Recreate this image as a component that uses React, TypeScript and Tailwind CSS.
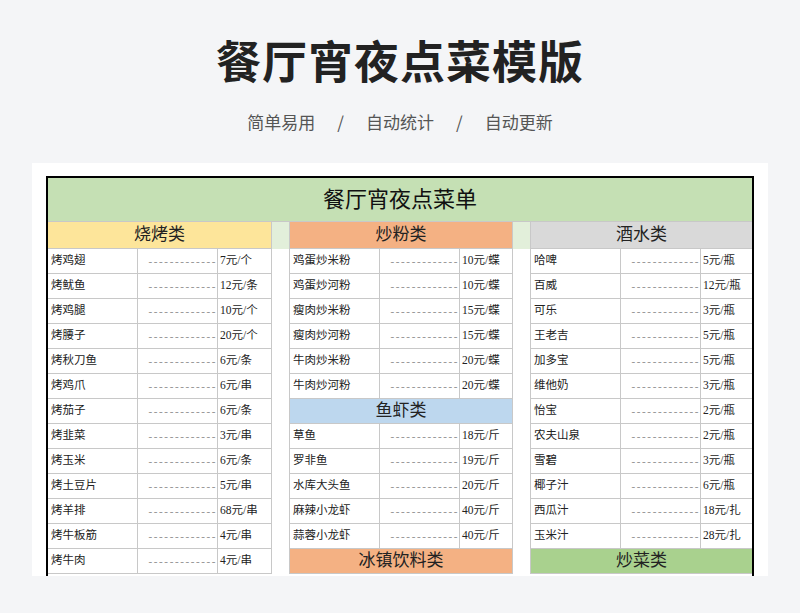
const F = { fontFamily: '"Liberation Serif","Noto Sans CJK SC",serif' };
const left = [["烤鸡翅","7元/个"],["烤鱿鱼","12元/条"],["烤鸡腿","10元/个"],["烤腰子","20元/个"],["烤秋刀鱼","6元/条"],["烤鸡爪","6元/串"],["烤茄子","6元/条"],["烤韭菜","3元/串"],["烤玉米","6元/条"],["烤土豆片","5元/串"],["烤羊排","68元/串"],["烤牛板筋","4元/串"],["烤牛肉","4元/串"]];
const mid1 = [["鸡蛋炒米粉","10元/蝶"],["鸡蛋炒河粉","10元/蝶"],["瘦肉炒米粉","15元/蝶"],["瘦肉炒河粉","15元/蝶"],["牛肉炒米粉","20元/蝶"],["牛肉炒河粉","20元/蝶"]];
const mid2 = [["草鱼","18元/斤"],["罗非鱼","19元/斤"],["水库大头鱼","20元/斤"],["麻辣小龙虾","40元/斤"],["蒜蓉小龙虾","40元/斤"]];
const right = [["哈啤","5元/瓶"],["百威","12元/瓶"],["可乐","3元/瓶"],["王老吉","5元/瓶"],["加多宝","5元/瓶"],["维他奶","3元/瓶"],["怡宝","2元/瓶"],["农夫山泉","2元/瓶"],["雪碧","3元/瓶"],["椰子汁","6元/瓶"],["西瓜汁","18元/扎"],["玉米汁","28元/扎"]];

function Head({ t, c, h = "h-[25px]" }: { t: string; c: string; h?: string }) {
  return <div className={`${h} shrink-0 flex items-center justify-center text-[17px] text-[#222] border-b border-[#c8c8c8] ${c}`}>{t}</div>;
}
function Row({ r }: { r: string[] }) {
  return (
    <div className="h-[25px] shrink-0 grid grid-cols-[90px_80px_1fr] border-b border-[#c8c8c8] text-[11.5px] text-[#222]">
      <div className="flex items-center pl-[3px] border-r border-[#c8c8c8] overflow-hidden whitespace-nowrap">{r[0]}</div>
      <div className="flex items-center justify-end border-r border-[#c8c8c8] text-[#888] overflow-hidden whitespace-nowrap text-[11px] tracking-[1.6px]">-------------</div>
      <div className="flex items-center pl-[2px] whitespace-nowrap overflow-hidden">{r[1]}</div>
    </div>
  );
}
export default function App() {
  return (
    <div className="w-[800px] h-[613px] bg-[#f4f5f7] flex flex-col items-center overflow-hidden" style={{ fontFamily: '"Noto Sans CJK SC",sans-serif' }}>
      <h1 className="mt-[32px] text-[45px] leading-[56px] font-bold text-[#222] tracking-[1px]">餐厅宵夜点菜模版</h1>
      <div className="mt-[22px] text-[17px] text-[#555] flex gap-[22px] leading-[24px]">
        <span>简单易用</span><span>/</span><span>自动统计</span><span>/</span><span>自动更新</span>
      </div>
      <div className="mt-[29px] w-[736px] h-[413px] bg-white pt-[13px] px-[14px] overflow-hidden" style={F}>
        <div className="h-[401px] border-2 border-b-0 border-black overflow-hidden">
          <div className="h-[44px] bg-[#c5e0b4] flex items-center justify-center text-[22px] text-[#111] border-b border-[#c8c8c8]">餐厅宵夜点菜单</div>
          <div className="grid grid-cols-[224px_17px_224px_17px_1fr]">
            <div className="flex flex-col border-r border-[#c8c8c8]">
              <Head t="烧烤类" c="bg-[#fde59a]" h="h-[27px]" />
              {left.map((r) => <Row key={r[0]} r={r} />)}
            </div>
            <div className="flex flex-col"><div className="h-[27px] bg-[#e2efda]" /></div>
            <div className="flex flex-col border-x border-[#c8c8c8]">
              <Head t="炒粉类" c="bg-[#f4b183]" h="h-[27px]" />
              {mid1.map((r) => <Row key={r[0]} r={r} />)}
              <Head t="鱼虾类" c="bg-[#bdd7ee]" />
              {mid2.map((r) => <Row key={r[0]} r={r} />)}
              <Head t="冰镇饮料类" c="bg-[#f4b183]" />
            </div>
            <div className="flex flex-col"><div className="h-[27px] bg-[#e2efda]" /></div>
            <div className="flex flex-col border-l border-[#c8c8c8]">
              <Head t="酒水类" c="bg-[#d9d9d9]" h="h-[27px]" />
              {right.map((r) => <Row key={r[0]} r={r} />)}
              <Head t="炒菜类" c="bg-[#a9d18e]" />
            </div>
          </div>
        </div>
      </div>
    </div>
  );
}
